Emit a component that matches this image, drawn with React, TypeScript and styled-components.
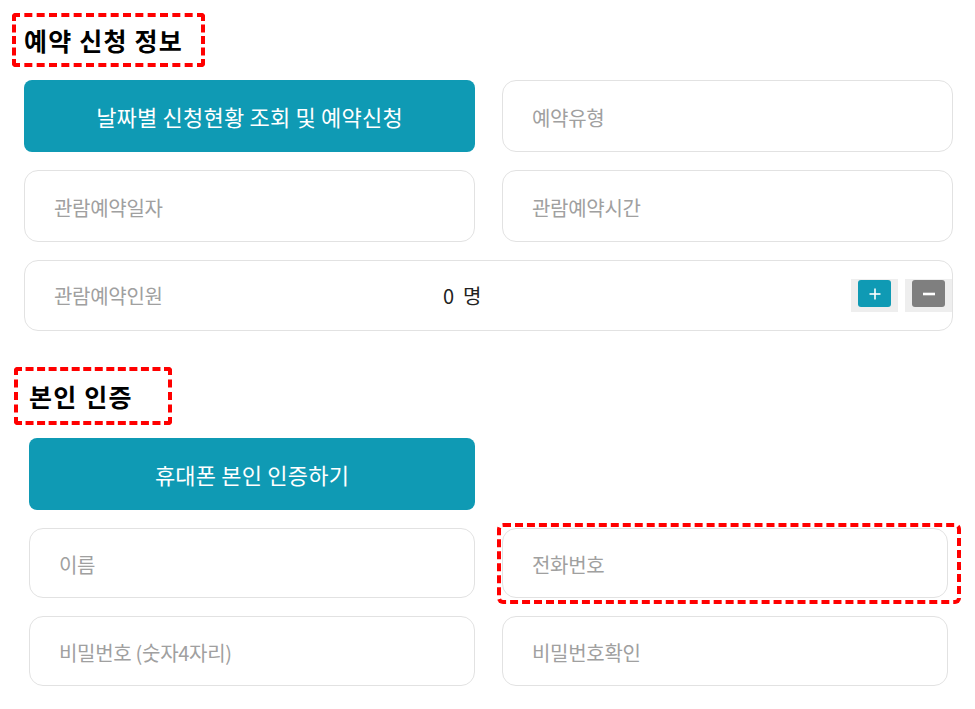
import styled, { createGlobalStyle } from "styled-components";

const GlobalStyle = createGlobalStyle`
    html, body {
        margin: 0;
        padding: 0;
        background: #ffffff;
    }
    body {
        font-family: "Noto Sans CJK KR", "Noto Sans", sans-serif;
        color: #222;
    }
    * {
        box-sizing: border-box;
    }
`;

const TEAL = "#0f9ab4";

const Field = ({ label, marked }: { label: string; marked?: boolean }) => (
    <FieldBox $marked={marked}>
        <Placeholder>{label}</Placeholder>
    </FieldBox>
);

const Stepper = ({ kind }: { kind: "plus" | "minus" }) => (
    <StepSlot>
        <StepButton color={kind === "plus" ? TEAL : "#7f7f7f"}>
            <svg width="14" height="14" viewBox="0 0 14 14">
                {kind === "plus" && (
                    <line x1="7" y1="1.5" x2="7" y2="12.5" stroke="#fff" strokeWidth="1.6" />
                )}
                <line
                    x1={kind === "plus" ? 1.5 : 1}
                    y1="7"
                    x2={kind === "plus" ? 12.5 : 13}
                    y2="7"
                    stroke="#fff"
                    strokeWidth={kind === "plus" ? 1.6 : 2.6}
                />
            </svg>
        </StepButton>
    </StepSlot>
);

export default function App() {
    return (
        <>
            <GlobalStyle />
            <Page>
                <Section>
                    <Heading $left={12} $width={193} $height={54} $padLeft={8}>
                        예약 신청 정보
                    </Heading>
                    <FormGrid $left={24} $right={22} $rows="72px 72px 71px">
                        <PrimaryButton>날짜별 신청현황 조회 및 예약신청</PrimaryButton>
                        <Field label="예약유형" />
                        <Field label="관람예약일자" />
                        <Field label="관람예약시간" />
                        <CounterRow>
                            <CounterLabel>관람예약인원</CounterLabel>
                            <CounterValue>0&nbsp;&nbsp;명</CounterValue>
                            <Steppers>
                                <Stepper kind="plus" />
                                <Stepper kind="minus" />
                            </Steppers>
                        </CounterRow>
                    </FormGrid>
                </Section>

                <Section $top={36}>
                    <Heading $left={14} $width={158} $height={58} $padLeft={11}>
                        본인 인증
                    </Heading>
                    <FormGrid $left={29} $right={27} $rows="72px 70px 70px">
                        <PrimaryButton>휴대폰 본인 인증하기</PrimaryButton>
                        <div />
                        <Field label="이름" />
                        <Field label="전화번호" marked />
                        <Field label="비밀번호 (숫자4자리)" />
                        <Field label="비밀번호확인" />
                    </FormGrid>
                </Section>
            </Page>
        </>
    );
}

const Page = styled.div`
    width: 975px;
    padding-top: 13px;
    display: flex;
    flex-direction: column;
`;

const Section = styled.section<{ $top?: number }>`
    display: flex;
    flex-direction: column;
    align-items: flex-start;
    margin-top: ${(p) => p.$top ?? 0}px;
`;

const Heading = styled.h2<{ $left: number; $width: number; $height: number; $padLeft: number }>`
    margin: 0 0 0 ${(p) => p.$left}px;
    width: ${(p) => p.$width}px;
    height: ${(p) => p.$height}px;
    padding-left: ${(p) => p.$padLeft}px;
    border: 4px dashed #ff0000;
    border-radius: 4px;
    display: flex;
    align-items: center;
    font-size: 25px;
    font-weight: 700;
    color: #000;
    letter-spacing: 1.2px;
    white-space: nowrap;
`;

const FormGrid = styled.div<{ $left: number; $right: number; $rows: string }>`
    align-self: stretch;
    margin: 13px ${(p) => p.$right}px 0 ${(p) => p.$left}px;
    display: grid;
    grid-template-columns: 1fr 1fr;
    grid-template-rows: ${(p) => p.$rows};
    column-gap: 27px;
    row-gap: 18px;
`;

const PrimaryButton = styled.button`
    border: none;
    border-radius: 8px;
    background: ${TEAL};
    color: #fff;
    font-family: inherit;
    font-size: 22px;
    font-weight: 400;
    letter-spacing: 0.2px;
    cursor: pointer;
`;

const FieldBox = styled.div<{ $marked?: boolean }>`
    position: relative;
    border: 1px solid #e2e2e2;
    border-radius: 14px;
    padding-left: 29px;
    display: flex;
    align-items: center;

    &::after {
        content: "";
        display: ${(p) => (p.$marked ? "block" : "none")};
        position: absolute;
        top: -6px;
        left: -6px;
        right: -14px;
        bottom: -7px;
        border: 4px dashed #ff0000;
        border-radius: 6px;
        pointer-events: none;
    }
`;

const Placeholder = styled.span`
    font-size: 20px;
    color: #a0a0a0;
    letter-spacing: -0.3px;
    padding-top: 2px;
`;

const CounterRow = styled.div`
    grid-column: 1 / span 2;
    border: 1px solid #e2e2e2;
    border-radius: 14px;
    padding-left: 29px;
    display: flex;
    align-items: center;
`;

const CounterLabel = styled.span`
    width: 389px;
    font-size: 20px;
    color: #a0a0a0;
    letter-spacing: -0.3px;
`;

const CounterValue = styled.span`
    font-size: 20px;
    color: #222;
`;

const Steppers = styled.div`
    margin-left: auto;
    display: flex;
    gap: 7px;
`;

const StepSlot = styled.div`
    width: 47px;
    height: 33px;
    background: #eeeeee;
    display: flex;
    justify-content: center;
    align-items: flex-start;
    padding-top: 1px;
`;

const StepButton = styled.div`
    width: 33px;
    height: 27px;
    border-radius: 3px;
    background: ${(props) => props.color};
    display: flex;
    justify-content: center;
    align-items: center;
`;
